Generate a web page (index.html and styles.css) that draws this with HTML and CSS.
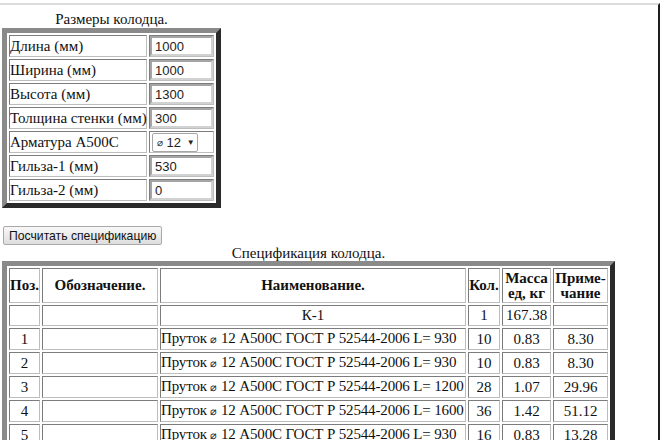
FILE: index.html
```html
<!DOCTYPE html>
<html lang="ru">
<head>
<meta charset="utf-8">
<title>Размеры колодца</title>
<link rel="stylesheet" href="styles.css">
</head>
<body>
<div class="frame">
  <div class="page">
    <table class="tbl dims">
      <caption>Размеры колодца.</caption>
      <colgroup><col class="c-lbl"><col class="c-val"></colgroup>
      <tr><td class="lbl">Длина (мм)</td><td class="val"><input class="inp" value="1000"></td></tr>
      <tr><td class="lbl">Ширина (мм)</td><td class="val"><input class="inp" value="1000"></td></tr>
      <tr><td class="lbl">Высота (мм)</td><td class="val"><input class="inp" value="1300"></td></tr>
      <tr><td class="lbl">Толщина стенки (мм)</td><td class="val"><input class="inp" value="300"></td></tr>
      <tr><td class="lbl">Арматура А500С</td><td class="val"><span class="sel"><span class="dia">⌀</span> 12 <span class="arr">▼</span></span></td></tr>
      <tr><td class="lbl">Гильза-1 (мм)</td><td class="val"><input class="inp" value="530"></td></tr>
      <tr><td class="lbl">Гильза-2 (мм)</td><td class="val"><input class="inp" value="0"></td></tr>
    </table>

    <button class="btn" type="button">Посчитать спецификацию</button>

    <table class="tbl spec">
      <caption>Спецификация колодца.</caption>
      <colgroup>
        <col class="c-pos"><col class="c-des"><col class="c-name"><col class="c-qty"><col class="c-mass"><col class="c-note">
      </colgroup>
      <tr class="head">
        <th>Поз.</th><th>Обозначение.</th><th>Наименование.</th><th>Кол.</th><th>Масса<br>ед, кг</th><th>Приме-<br>чание</th>
      </tr>
      <tr><td></td><td></td><td class="ctr">К-1</td><td class="ctr">1</td><td class="ctr">167.38</td><td></td></tr>
      <tr><td class="ctr">1</td><td></td><td class="name">Пруток <span class="dia">⌀</span> 12 А500С ГОСТ Р 52544-2006 L= 930</td><td class="ctr">10</td><td class="ctr">0.83</td><td class="ctr">8.30</td></tr>
      <tr><td class="ctr">2</td><td></td><td class="name">Пруток <span class="dia">⌀</span> 12 А500С ГОСТ Р 52544-2006 L= 930</td><td class="ctr">10</td><td class="ctr">0.83</td><td class="ctr">8.30</td></tr>
      <tr><td class="ctr">3</td><td></td><td class="name">Пруток <span class="dia">⌀</span> 12 А500С ГОСТ Р 52544-2006 L= 1200</td><td class="ctr">28</td><td class="ctr">1.07</td><td class="ctr">29.96</td></tr>
      <tr><td class="ctr">4</td><td></td><td class="name">Пруток <span class="dia">⌀</span> 12 А500С ГОСТ Р 52544-2006 L= 1600</td><td class="ctr">36</td><td class="ctr">1.42</td><td class="ctr">51.12</td></tr>
      <tr><td class="ctr">5</td><td></td><td class="name">Пруток <span class="dia">⌀</span> 12 А500С ГОСТ Р 52544-2006 L= 930</td><td class="ctr">16</td><td class="ctr">0.83</td><td class="ctr">13.28</td></tr>
    </table>
  </div>
</div>
</body>
</html>
```

FILE: styles.css
```css
html, body {
  margin: 0;
  padding: 0;
  background: #ffffff;
}

body {
  font-family: "Liberation Serif", "Times New Roman", serif;
  font-size: 15px;
  color: #111111;
}

.frame {
  box-sizing: border-box;
  width: 660px;
  height: 437px;
  margin-top: 3px;
  border-top: 2px solid #dcdcdc;
  border-right: 2px solid #1e1e1e;
  overflow: hidden;
}

.page {
  padding: 5px 0 0 2px;
}

.tbl {
  border-collapse: separate;
  border-spacing: 2px;
  border: 5px solid;
  border-color: #8a8a8a #2a2a2a #2a2a2a #8a8a8a;
  table-layout: fixed;
}

.tbl caption {
  text-align: center;
  line-height: 18px;
}

.tbl td,
.tbl th {
  box-sizing: border-box;
  border: 1px solid;
  border-color: #7c7c7c #bdbdbd #bdbdbd #7c7c7c;
  padding: 0;
}

/* sizes table */
.dims {
  width: 219px;
}

.c-lbl { width: 138px; }
.c-val { width: 65px; }

.dims td {
  height: 22px;
  line-height: 18px;
  white-space: nowrap;
}

.lbl {
  padding-left: 2px;
}

.inp {
  display: block;
  box-sizing: border-box;
  width: 63px;
  height: 20px;
  margin: 0;
  padding: 0 3px;
  border: 2px solid;
  border-color: #a5a5a5 #d2d2d2 #d2d2d2 #a5a5a5;
  background: #ffffff;
  font-family: "Liberation Sans", Arial, sans-serif;
  font-size: 13px;
  color: #222222;
}

.sel {
  display: inline-flex;
  align-items: center;
  box-sizing: border-box;
  width: 46px;
  height: 19px;
  margin-left: 2px;
  padding: 0 0 0 4px;
  border: 1px solid #a6a6a6;
  border-radius: 2px;
  background: #ffffff;
  font-family: "Liberation Sans", Arial, sans-serif;
  font-size: 13px;
  color: #222222;
  vertical-align: middle;
  white-space: pre;
}

.sel .dia {
  font-size: 10px;
}

.sel .arr {
  font-size: 8px;
  margin-left: 2px;
}

/* button */
.btn {
  display: block;
  box-sizing: border-box;
  height: 19px;
  margin: 18px 0 0 1px;
  padding: 0 5px;
  border: 1px solid #a9a9a9;
  border-radius: 2px;
  background: linear-gradient(#f8f8f8, #dddddd);
  font-family: "Liberation Sans", Arial, sans-serif;
  font-size: 12.2px;
  color: #111111;
  line-height: 16px;
}

/* spec table */
.spec {
  width: 613px;
}

.spec caption {
  line-height: 16px;
}

.c-pos { width: 31px; }
.c-des { width: 116px; }
.c-name { width: 306px; }
.c-qty { width: 32px; }
.c-mass { width: 49px; }
.c-note { width: 55px; }

.spec th {
  height: 35px;
  font-weight: bold;
  line-height: 15px;
  text-align: center;
}

.spec td {
  height: 21px;
  line-height: 19px;
  white-space: nowrap;
}

.ctr {
  text-align: center;
}

.name {
  padding-left: 1px;
  letter-spacing: -0.15px;
}

.name .dia {
  font-size: 11px;
}
```
